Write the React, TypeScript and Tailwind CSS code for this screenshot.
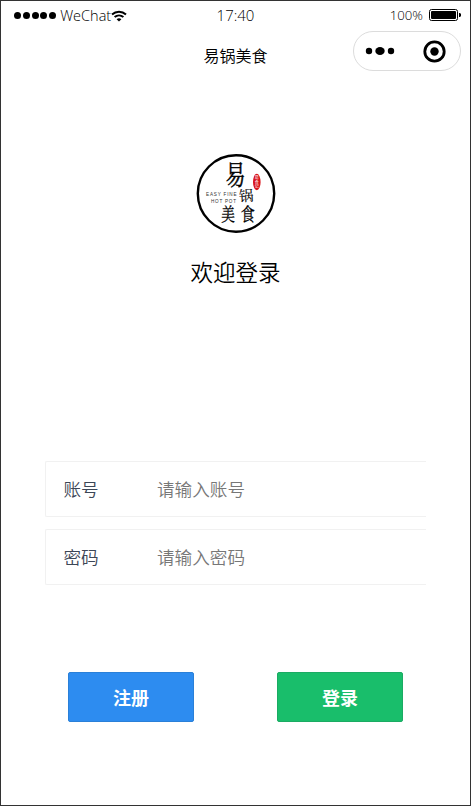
const cjk = "font-['Noto_Sans_CJK_SC',sans-serif]";

function WifiIcon() {
  return (
    <svg className="h-[12px] w-[16px]" viewBox="0 0 16 12" fill="none" stroke="#000" strokeWidth="2">
      <path d="M1 4.4C5 0.7 11 0.7 15 4.4" />
      <path d="M3.6 7.1C6.2 4.8 9.8 4.8 12.4 7.1" />
      <path d="M8 11.6 5.6 9.2C7 8 9 8 10.4 9.2Z" fill="#000" stroke="none" />
    </svg>
  );
}

function BatteryIcon() {
  return (
    <svg className="h-[13px] w-[33px]" viewBox="0 0 33 13">
      <rect x="0.5" y="0.5" width="28" height="11" rx="2" fill="#fff" stroke="#000" />
      <rect x="2" y="2" width="25" height="8" rx="1" fill="#000" />
      <path d="M30 4h1l1 1v2l-1 1h-1Z" fill="#000" />
    </svg>
  );
}

function StatusBar() {
  return (
    <div className="grid h-[29px] grid-cols-3 items-center font-['Open_Sans',sans-serif] font-[350] text-black">
      <div className="flex items-center pl-[13px]">
        <div className="flex gap-[1.8px]">
          {[0, 1, 2, 3, 4].map((i) => (
            <span key={i} className="h-[7px] w-[7px] rounded-full bg-black" />
          ))}
        </div>
        <span className="ml-[4px] w-[51px] text-[14.5px] whitespace-nowrap">WeChat</span>
        <WifiIcon />
      </div>
      <div className="text-center text-[15px]">17:40</div>
      <div className="flex items-center justify-end pr-[8px]">
        <span className="mr-[6px] text-[13.2px]">100%</span>
        <BatteryIcon />
      </div>
    </div>
  );
}

function Capsule() {
  return (
    <div className="flex h-[40px] w-[108px] items-center rounded-full border border-[#dcdcdc] bg-white">
      <svg className="h-[38px] w-[106px]" viewBox="0 0 106 38">
        <circle cx="15" cy="19" r="3.2" />
        <ellipse cx="26" cy="19" rx="4.7" ry="4" />
        <circle cx="37" cy="19" r="3.2" />
        <circle cx="80.5" cy="19.5" r="9.7" fill="none" stroke="#000" strokeWidth="2.8" />
        <circle cx="80.5" cy="19.5" r="4.2" />
      </svg>
    </div>
  );
}

function Logo() {
  return (
    <svg className="h-[80px] w-[80px]" viewBox="0 0 80 80">
      <circle cx="40" cy="39.5" r="38.2" fill="#fff" stroke="#000" strokeWidth="2.4" />
      <g fontFamily="'Noto Serif CJK SC','Noto Sans CJK SC',serif" fill="#000" stroke="#000" textAnchor="middle">
        <text transform="translate(39.5 30.5) scale(.74 1)" fontSize="27" strokeWidth=".5">易</text>
        <text transform="translate(50.5 47) rotate(-3)" fontSize="14.5" strokeWidth=".1">锅</text>
        <text transform="translate(32 66.5) scale(.76 1)" fontSize="18" strokeWidth=".3">美</text>
        <text transform="translate(51.7 66.5) scale(.78 1)" fontSize="18" strokeWidth=".3">食</text>
      </g>
      <g fontFamily="'Liberation Sans',sans-serif" fontSize="4.6" fill="#333">
        <text x="10" y="41.7" textLength="30.5" lengthAdjust="spacing">EASY FINE</text>
        <text x="15" y="48.6" textLength="25" lengthAdjust="spacing">HOT POT</text>
      </g>
      <ellipse cx="60.8" cy="28" rx="3.8" ry="8.3" fill="#d8141c" />
      <g fontFamily="'Noto Sans CJK SC',sans-serif" fontSize="4" fill="#fff" textAnchor="middle">
        <text x="60.8" y="25">易</text>
        <text x="60.8" y="29.8">食</text>
        <text x="60.8" y="34.4">记</text>
      </g>
    </svg>
  );
}

function Field({ label, placeholder, width }: { label: string; placeholder: string; width: string }) {
  return (
    <label className={`flex h-[56px] items-center rounded-l-[2px] border border-r-0 border-[#f1f1f1] pl-[17.5px] text-[17.6px] ${width}`}>
      <span className="w-[93.5px] font-[350] text-[#3c4656]">{label}</span>
      <input
        className="w-[200px] bg-transparent font-[350] outline-none placeholder:text-[#777]"
        placeholder={placeholder}
      />
    </label>
  );
}

export default function App() {
  return (
    <div className={`flex h-[806px] w-[471px] flex-col overflow-hidden border border-[#333] bg-white ${cjk}`}>
      <StatusBar />
      <header className="grid h-[42px] grid-cols-[1fr_auto_1fr] items-center">
        <span />
        <h1 className="pt-[7px] text-[16px] leading-6 font-[350] text-black">易锅美食</h1>
        <div className="flex justify-end pr-[9px]">
          <Capsule />
        </div>
      </header>
      <main className="flex flex-col">
        <div className="mt-[82px] flex flex-col items-center">
          <Logo />
          <h2 className="mt-[20px] text-[22.5px] leading-[34px] font-[350] text-black">欢迎登录</h2>
        </div>
        <form className="mt-[173px] ml-[44px] flex flex-col gap-[12px]">
          <Field label="账号" placeholder="请输入账号" width="w-[381px]" />
          <Field label="密码" placeholder="请输入密码" width="w-[381px]" />
        </form>
        <div className="mt-[87px] flex justify-between pr-[67px] pl-[67px] text-[18px] font-bold text-white">
          <button className="h-[50px] w-[126px] rounded-[2px] border border-[#2a80d8] bg-[#2d8cf0]">注册</button>
          <button className="h-[50px] w-[126px] rounded-[2px] border border-[#1bab63] bg-[#19be6b]">登录</button>
        </div>
      </main>
    </div>
  );
}
